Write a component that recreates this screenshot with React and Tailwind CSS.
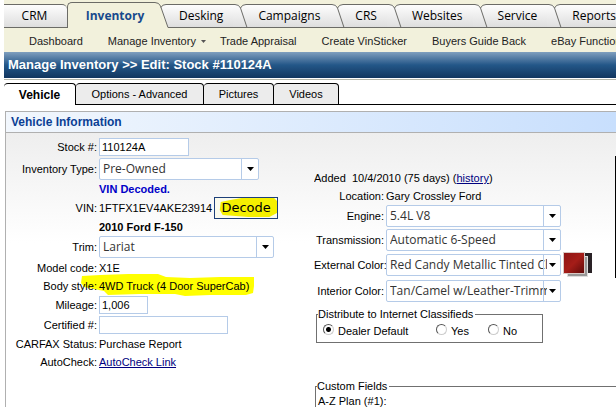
import React from "react";

const NAV_TABS = ["Desking", "Campaigns", "CRS", "Websites", "Service"];

function TabEdge({ active = false }) {
  return (
    <svg
      className={active ? "block w-4 h-[26px] shrink-0 self-end" : "block w-4 h-6 shrink-0 self-end"}
      viewBox={active ? "0 -2 16 26" : "0 0 16 24"}
      fill="none"
      aria-hidden="true"
    >
      <defs>
        <linearGradient id="edgeFill" x1="0" y1="0" x2="0" y2="1">
          <stop offset="0" stopColor="#fdfdfd" />
          <stop offset="1" stopColor="#dedede" />
        </linearGradient>
      </defs>
      {active ? (
        <>
          <path d="M7 3.5Q8 .5 12 .5H16V24H14Z" fill="url(#edgeFill)" />
          <path d="M0 -1.5H1Q5 -1.5 6.500 2L14 23.500H16" stroke="#6b6b66" />
          <path d="M7 3.500Q8 .5 12 .5H16" stroke="#6b6b66" />
        </>
      ) : (
        <>
          <path d="M0 .5H3Q7 .5 8 4Q9 .5 13 .5H16V24H0Z" fill="url(#edgeFill)" />
          <path d="M0 .5H2Q6 .5 7.500 4L14 23.500" stroke="#6b6b66" />
          <path d="M7.500 4Q9 .5 13 .5H16M0 23.500H16" stroke="#6b6b66" />
        </>
      )}
    </svg>
  );
}

const tabFace =
  "h-6 shrink-0 self-end border-y border-[#6b6b66] bg-linear-to-b from-[#fdfdfd] to-[#dedede] text-black";

function TopNav() {
  return (
    <nav className="bg-[#f2f1dc]">
      <div className="flex h-7 items-end font-['Open_Sans','Noto_Sans',sans-serif] text-[12px] leading-5">
        <button className={`${tabFace} w-[63px] rounded-tr-[5px] pr-[2px]`}>CRM</button>
        <button className="h-[26px] w-[87px] shrink-0 rounded-tl-[5px] border-l border-t border-[#6b6b66] pl-2 font-bold text-[#174a8c]">
          Inventory
        </button>
        <TabEdge active />
        {NAV_TABS.map((name) => (
          <React.Fragment key={name}>
            <button className={`${tabFace} pl-[9px] pr-[10px]`}>{name}</button>
            <TabEdge />
          </React.Fragment>
        ))}
        <button className={`${tabFace} grow pl-[9px] text-left`}>Reports</button>
      </div>
      <div className="flex h-6 items-center whitespace-nowrap pl-[25px] pt-[2px] text-[#222]">
        <a href="#dashboard" className="mr-[25px]">Dashboard</a>
        <a href="#inventory" className="flex items-center">
          Manage Inventory
          <svg className="ml-[5px] mr-[14px] h-[3px] w-[5px]" viewBox="0 0 5 3" aria-hidden="true">
            <path d="M0 0H5L2.500 3Z" fill="#555" />
          </svg>
        </a>
        <a href="#appraisal" className="mr-[25px]">Trade Appraisal</a>
        <a href="#vinsticker" className="mr-[25px]">Create VinSticker</a>
        <a href="#guide" className="mr-[25px]">Buyers Guide Back</a>
        <a href="#ebay">eBay Functions</a>
      </div>
    </nav>
  );
}

function PageTabs() {
  const tab = "h-full rounded-t-[4px] border-r border-t border-black";
  return (
    <div className="mt-[3px] flex h-[22px]">
      <button className={`${tab} w-[72px] bg-white text-[12px] font-bold`}>Vehicle</button>
      <button className={`${tab} w-32 border-b bg-[#ececec]`}>Options - Advanced</button>
      <button className={`${tab} w-[70px] border-b bg-[#ececec]`}>Pictures</button>
      <button className={`${tab} w-[65px] border-b bg-[#ececec]`}>Videos</button>
      <div className="grow border-b border-black" />
    </div>
  );
}

function Select({ id, value, width }) {
  return (
    <div className={`relative h-[22px] shrink-0 ${width}`}>
      <select
        id={id}
        className="h-full w-full appearance-none rounded-[2px] border border-[#b5cbe8] bg-white pl-[3px] pr-[13px] font-['Open_Sans','Noto_Sans',sans-serif] text-[12px] leading-5 text-[#333]"
      >
        <option>{value}</option>
      </select>
      <span className="pointer-events-none absolute inset-y-px right-px flex w-[17px] items-center justify-center border-l border-[#b5cbe8]">
        <svg className="h-1 w-[7px]" viewBox="0 0 7 4" aria-hidden="true">
          <path d="M0 0H7L3.500 4Z" fill="#000" />
        </svg>
      </span>
    </div>
  );
}

function Row({ label, htmlFor, height, labelWidth = "w-[91px]", children }) {
  return (
    <div className={`relative flex items-center gap-[2px] whitespace-nowrap ${height}`}>
      {htmlFor ? (
        <label htmlFor={htmlFor} className={`relative shrink-0 text-right ${labelWidth}`}>{label}</label>
      ) : (
        <span className={`relative z-10 shrink-0 text-right ${labelWidth}`}>{label}</span>
      )}
      {children}
    </div>
  );
}

const inputStyle = "h-[18px] border border-[#b5cbe8] bg-white px-[2px] text-[11px]";

function LeftColumn() {
  return (
    <div className="w-[308px] shrink-0 pt-1">
      <Row label="Stock #:" htmlFor="stock" height="h-5">
        <input id="stock" defaultValue="110124A" className={`${inputStyle} w-[90px]`} />
      </Row>
      <Row label="Inventory Type:" htmlFor="type" height="h-6">
        <Select id="type" value="Pre-Owned" width="w-40" />
      </Row>
      <Row height="h-4">
        <b className="text-[#0000c8]">VIN Decoded.</b>
      </Row>
      <Row label="VIN:" height="h-[22px]">
        <span>1FTFX1EV4AKE23914</span>
        <button className="relative h-[22px] w-16 border border-[#1d3f7a] bg-[#fbfbee] font-['DejaVu_Sans',sans-serif] text-[13px] leading-5">
          <svg className="absolute inset-0 h-full w-full" viewBox="0 0 65 20" preserveAspectRatio="none" aria-hidden="true">
            <path d="M6 4L16 2L28 0L62 0L65 3V15L57 19L35 19L8 17L5 12Z" fill="#f5f000" />
          </svg>
          <span className="relative">Decode</span>
        </button>
      </Row>
      <Row height="h-4">
        <b>2010 Ford F-150</b>
      </Row>
      <Row label="Trim:" htmlFor="trim" height="h-6">
        <Select id="trim" value="Lariat" width="w-[175px]" />
      </Row>
      <Row label="Model code:" height="h-[18px]">
        <span>X1E</span>
      </Row>
      <Row label="Body style:" height="h-[18px]">
        <svg className="absolute left-[74px] top-[-4px] h-6 w-[176px]" viewBox="0 0 176 24" aria-hidden="true">
          <path d="M2 3L20 2L48 1L78 1L86 4L110 5L140 4L174 4L174 13L173 20L166 22L130 22L105 23L95 21L60 21L28 22L24 18L4 14L1 10Z" fill="#ffff00" />
        </svg>
        <span className="relative">4WD Truck (4 Door SuperCab)</span>
      </Row>
      <Row label="Mileage:" htmlFor="mileage" height="h-5">
        <input id="mileage" defaultValue="1,006" className={`${inputStyle} w-[49px]`} />
      </Row>
      <Row label="Certified #:" htmlFor="certified" height="h-5">
        <input id="certified" className={`${inputStyle} w-[129px]`} />
      </Row>
      <Row label="CARFAX Status:" height="h-[18px]">
        <span>Purchase Report</span>
      </Row>
      <Row label="AutoCheck:" height="h-[18px]">
        <a href="#autocheck" className="text-[#000080] underline">AutoCheck Link</a>
      </Row>
    </div>
  );
}

function ColorSwatch() {
  return (
    <svg className="h-[26px] w-[30px] shrink-0" viewBox="0 0 30 26" aria-hidden="true">
      <defs>
        <linearGradient id="red" x1="0" y1="0" x2="1" y2="1">
          <stop offset="0" stopColor="#8c1414" />
          <stop offset=".5" stopColor="#a51d18" />
          <stop offset="1" stopColor="#5c0a0a" />
        </linearGradient>
      </defs>
      <rect x="10" y="1" width="19" height="20" fill="#2a2226" />
      <rect x="4.5" y="4.5" width="20" height="20" fill="#989898" stroke="#ddd" />
      <rect x=".5" y=".5" width="21" height="21" fill="url(#red)" stroke="#d9c9c5" />
    </svg>
  );
}

function Choice({ id, label, checked, width }) {
  return (
    <span className={`flex items-center gap-1 ${width}`}>
      <input
        id={id}
        type="radio"
        name="distribute"
        defaultChecked={checked}
        className="mb-1 h-[11px] w-[11px] appearance-none rounded-full border border-b-[#ccc] border-l-[#555] border-r-[#ccc] border-t-[#555] bg-white checked:bg-[radial-gradient(circle,#000_2px,#fff_3px)]"
      />
      <label htmlFor={id}>{label}</label>
    </span>
  );
}

function RightColumn() {
  const lw = "w-[70px]";
  return (
    <div className="min-w-0 grow">
      <div className="flex overflow-hidden">
        <div className="w-[301px] shrink-0 pt-[37px]">
          <p className="h-[17px] whitespace-pre">
            Added  10/4/2010 (75 days) (<a href="#history" className="text-[#000080] underline">history</a>)
          </p>
          <Row label="Location:" height="h-[17px]" labelWidth={lw}>
            <span>Gary Crossley Ford</span>
          </Row>
          <Row label="Engine:" htmlFor="engine" height="h-6" labelWidth={lw}>
            <Select id="engine" value="5.4L V8" width="w-[175px]" />
          </Row>
          <Row label="Transmission:" htmlFor="trans" height="h-6" labelWidth={lw}>
            <Select id="trans" value="Automatic 6-Speed" width="w-[175px]" />
          </Row>
          <Row label="External Color:" htmlFor="ext" height="h-[26px]" labelWidth={lw}>
            <Select id="ext" value="Red Candy Metallic Tinted Clearcoat" width="w-[175px]" />
            <ColorSwatch />
          </Row>
          <Row label="Interior Color:" htmlFor="int" height="h-[26px]" labelWidth={lw}>
            <Select id="int" value="Tan/Camel w/Leather-Trimmed" width="w-[175px]" />
          </Row>
        </div>
        <div className="mt-[23px] h-[122px] w-40 shrink-0 bg-black" />
      </div>
      <fieldset className="ml-[2px] mt-1 h-[35px] w-[227px] border border-[#707070]">
        <legend className="ml-px pr-[2px] leading-3">Distribute to Internet Classifieds</legend>
        <div className="flex h-[22px] items-center pl-1.5">
          <Choice id="default" label="Dealer Default" checked width="w-[113px]" />
          <Choice id="yes" label="Yes" width="w-[52px]" />
          <Choice id="no" label="No" width="w-10" />
        </div>
      </fieldset>
      <fieldset className="ml-px mt-[37px] h-40 border border-r-0 border-[#707070]">
        <legend className="ml-px pr-[2px] leading-3">Custom Fields</legend>
        <p className="pl-[2px] leading-[18px]">A-Z Plan (#1):</p>
      </fieldset>
    </div>
  );
}

export default function App() {
  return (
    <div className="h-screen overflow-hidden bg-white pl-1 font-['Liberation_Sans',Arial,sans-serif] text-[11px] leading-4 text-black">
      <TopNav />
      <h1 className="h-[26px] whitespace-nowrap bg-linear-to-b from-[#7f9fbe] via-[#235788] via-50% to-[#12365f] pl-1 text-[13px] font-bold leading-[26px] text-white">
        Manage Inventory &gt;&gt; Edit: Stock #110124A
      </h1>
      <div className="mt-px h-px bg-[#b5b5a8]" />
      <PageTabs />
      <section className="ml-px mt-1.5 border-l border-t border-[#b0b0b0]">
        <h2 className="h-[21px] border-b border-[#b0b0b0] bg-linear-to-r from-[#f2f7fd] to-[#c8dffd] pl-[5px] text-[12px] font-bold leading-[21px] text-[#0b3f94]">
          Vehicle Information
        </h2>
        <div className="flex bg-linear-to-b from-[#eeeeee] to-white to-[110px]">
          <LeftColumn />
          <RightColumn />
        </div>
      </section>
    </div>
  );
}
